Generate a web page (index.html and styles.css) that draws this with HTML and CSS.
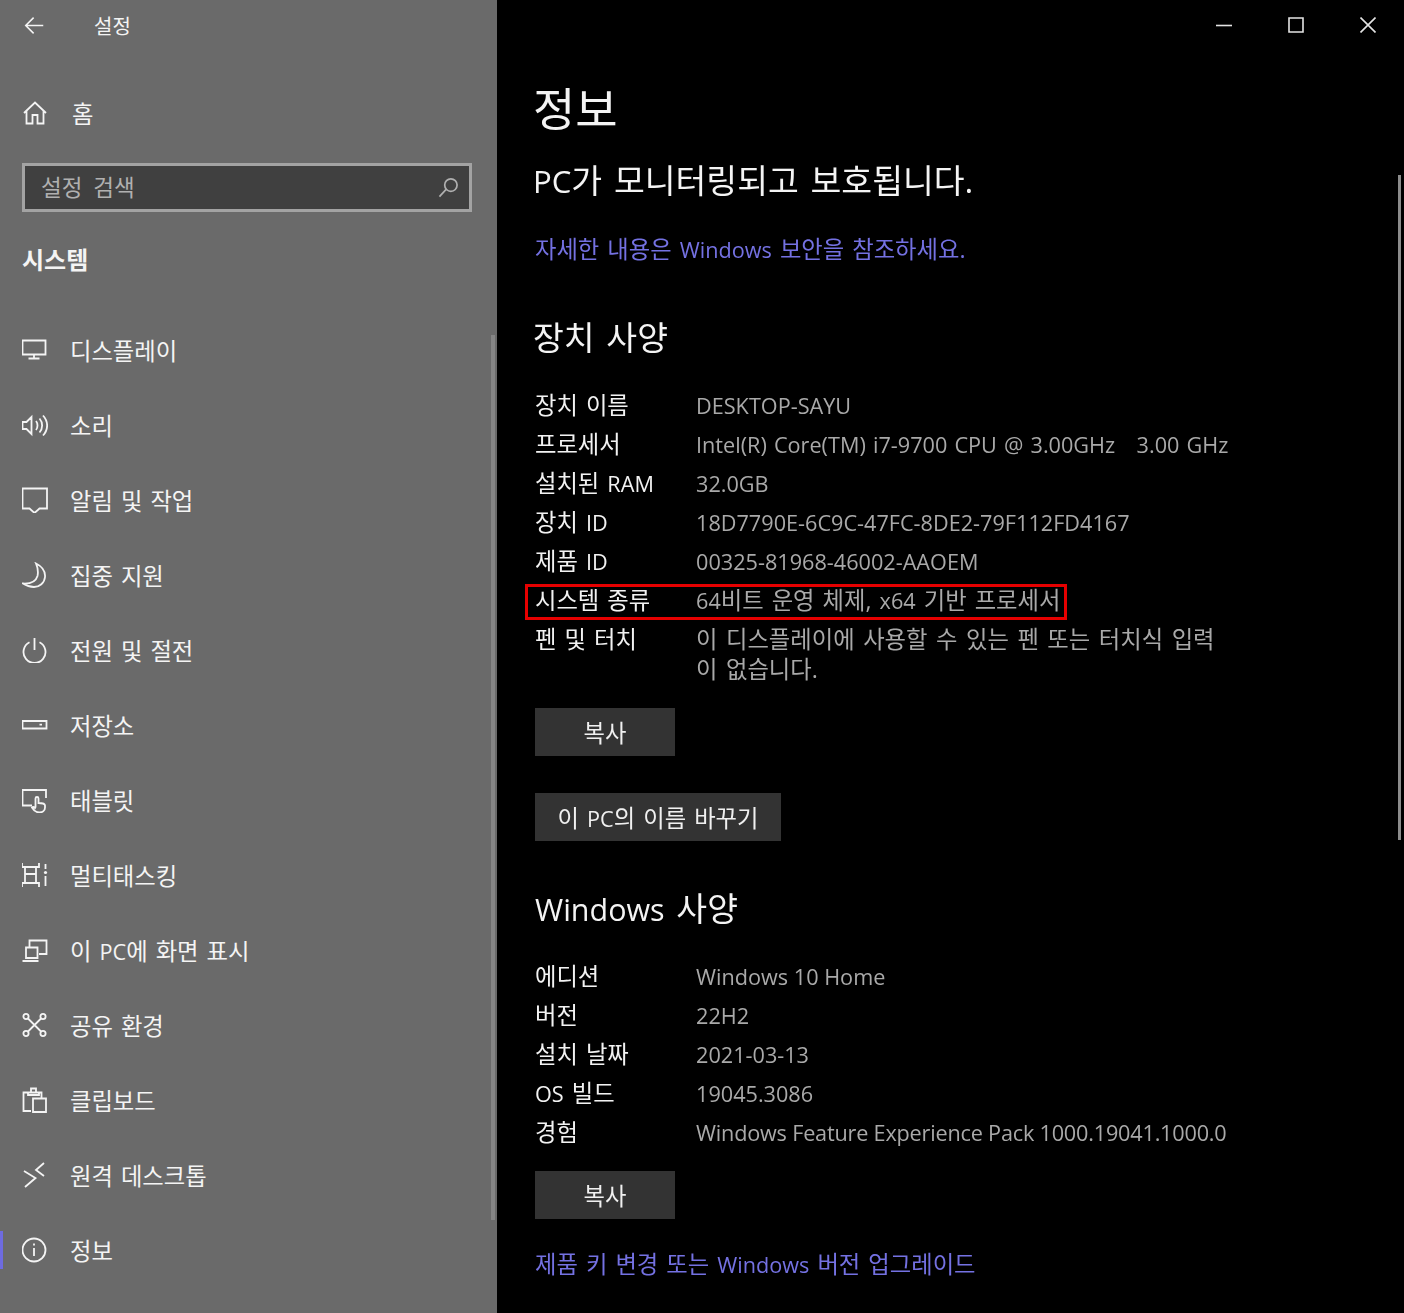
FILE: index.html
```html
<!DOCTYPE html>
<html lang="ko">
<head>
<meta charset="utf-8">
<title>설정</title>
<link rel="stylesheet" href="styles.css">
</head>
<body>
<div class="app">
  <aside class="sidebar">
    <div class="side-head">
      <svg class="back" viewBox="0 0 24 24"><path d="M11 3 2 12l9 9M3 12h19"/></svg>
      <span class="side-title">설정</span>
    </div>
    <div class="home">
      <svg class="icon" viewBox="0 0 26 26"><path d="M2 13 13 2.500 24 13M4.500 11v12.500h6V15h5v8.500h6V11"/></svg>
      <span>홈</span>
    </div>
    <div class="search">
      <span class="search-text">설정 검색</span>
      <svg class="search-icon" viewBox="0 0 22 22"><circle cx="13.500" cy="8.500" r="6.500"/><path d="M8.500 13 1.500 20.500"/></svg>
    </div>
    <div class="side-heading">시스템</div>
    <nav class="nav">
      <div class="nav-item"><svg class="icon" viewBox="0 0 26 26"><path d="M.500 3.500h23v14H.500zM12 17.500v4M6.500 21.500h11"/></svg><span>디스플레이</span></div>
      <div class="nav-item"><svg class="icon" viewBox="0 0 26 26"><path d="M.500 10v7h4l5 5V5l-5 5zM14 9c2 2.500 2 6.500 0 9M17.500 6.500c3.500 4 3.500 10 0 14M21 3.500c5.500 6 5.500 14 0 20"/></svg><span>소리</span></div>
      <div class="nav-item"><svg class="icon" viewBox="0 0 26 26"><path d="M.500 1.500h24.500v20h-7.500L12.500 26l-5-4.500h-7z"/></svg><span>알림 및 작업</span></div>
      <div class="nav-item"><svg class="icon" viewBox="0 0 26 26"><path d="M14 1.500c6 3 9.500 8 9 13.500-.5 6-5.500 10-11 10-4 0-8-1.500-11-3.500 8 .5 13-2.500 14.500-7.500 1-4.500 0-9-1.500-12.500z"/></svg><span>집중 지원</span></div>
      <div class="nav-item"><svg class="icon" viewBox="0 0 26 26"><path d="M7.500 5.200a11 11 0 1 0 10 0M12.500 1v12"/></svg><span>전원 및 절전</span></div>
      <div class="nav-item"><svg class="icon" viewBox="0 0 26 26"><path d="M.500 9h24v7.500H.500zM17.500 12.700H20"/></svg><span>저장소</span></div>
      <div class="nav-item"><svg class="icon" viewBox="0 0 26 26"><path d="M10 18.500H.500V3h23.500v8"/><path d="M13.500 20v-8.500c0-2 3-2 3 0V16c3.500 0 6.500.5 6.500 2.500v2c0 3-2.500 5-5.500 5-3 0-5.500-1.500-7.500-5 1-1 2-.5 3 .5z"/></svg><span>태블릿</span></div>
      <div class="nav-item"><svg class="icon" viewBox="0 0 26 26"><path d="M0 1v4h17V1M0 25v-4h17v4M3 5v16M14 5v16M3 12h11M23.500 2v5M23.500 14v10"/><circle class="dot" cx="23.500" cy="10.500" r="1.600"/></svg><span>멀티태스킹</span></div>
      <div class="nav-item"><svg class="icon" viewBox="0 0 26 26"><path d="M7.500 10V3.500h17v13.500H17"/><path d="M4 10.500h11.500V21H4zM.500 24h16"/></svg><span>이 <span class="la">PC</span>에 화면 표시</span></div>
      <div class="nav-item"><svg class="icon" viewBox="0 0 26 26"><circle cx="4" cy="4.500" r="2.600"/><circle cx="21" cy="4.500" r="2.600"/><circle cx="4" cy="21.500" r="2.600"/><circle cx="21" cy="21.500" r="2.600"/><path d="m6 6.500 13 13M19 6.500l-13 13"/></svg><span>공유 환경</span></div>
      <div class="nav-item"><svg class="icon" viewBox="0 0 26 26"><path d="M9 24H1.500V5.500h18v5M6 5.500V8h11V5.500h-3V1.500H9v4zM11 11.500h13V25H11z"/></svg><span>클립보드</span></div>
      <div class="nav-item"><svg class="icon" viewBox="0 0 26 26"><path d="m2 9 11.500 7L3 25M22 1l-8 7 8 6"/></svg><span>원격 데스크톱</span></div>
      <div class="nav-item active"><svg class="icon" viewBox="0 0 26 26"><circle cx="12" cy="13" r="11.500"/><path d="M12 11v8M12 6.500v2"/></svg><span>정보</span></div>
    </nav>
    <div class="side-scroll"></div>
  </aside>
  <main class="main">
    <div class="titlebar">
      <button class="win-btn"><svg viewBox="0 0 16 16"><path d="M0 8.500h16"/></svg></button>
      <button class="win-btn"><svg viewBox="0 0 16 16"><path d="M1 1h14v14H1z"/></svg></button>
      <button class="win-btn"><svg viewBox="0 0 16 16"><path d="m.5.500 15 15M15.500.500l-15 15"/></svg></button>
    </div>
    <h1 class="page-title">정보</h1>
    <p class="status"><span class="la">PC</span>가 모니터링되고 보호됩니다.</p>
    <a class="link security-link">자세한 내용은 <span class="la">Windows</span> 보안을 참조하세요.</a>
    <h2 class="section first-section">장치 사양</h2>
    <div class="specs">
      <div class="row"><span class="k">장치 이름</span><span class="v la">DESKTOP-SAYU</span></div>
      <div class="row"><span class="k">프로세서</span><span class="v la wide">Intel(R) Core(TM) i7-9700 CPU @ 3.00GHz &nbsp; 3.00 GHz</span></div>
      <div class="row"><span class="k">설치된 <span class="la">RAM</span></span><span class="v la">32.0GB</span></div>
      <div class="row"><span class="k">장치 <span class="la">ID</span></span><span class="v la">18D7790E-6C9C-47FC-8DE2-79F112FD4167</span></div>
      <div class="row"><span class="k">제품 <span class="la">ID</span></span><span class="v la">00325-81968-46002-AAOEM</span></div>
      <div class="row marked"><span class="k">시스템 종류</span><span class="v"><span class="la">64</span>비트 운영 체제, <span class="la">x64</span> 기반 프로세서</span></div>
      <div class="row"><span class="k">펜 및 터치</span><span class="v wrap">이 디스플레이에 사용할 수 있는 펜 또는 터치식 입력이 없습니다.</span></div>
    </div>
    <button class="btn copy">복사</button>
    <button class="btn rename">이 <span class="la">PC</span>의 이름 바꾸기</button>
    <h2 class="section win-section"><span class="la">Windows</span> 사양</h2>
    <div class="specs win-specs">
      <div class="row"><span class="k">에디션</span><span class="v la">Windows 10 Home</span></div>
      <div class="row"><span class="k">버전</span><span class="v la">22H2</span></div>
      <div class="row"><span class="k">설치 날짜</span><span class="v la">2021-03-13</span></div>
      <div class="row"><span class="k"><span class="la">OS</span> 빌드</span><span class="v la">19045.3086</span></div>
      <div class="row"><span class="k">경험</span><span class="v la tight">Windows Feature Experience Pack 1000.19041.1000.0</span></div>
    </div>
    <button class="btn copy copy-two">복사</button>
    <a class="link upgrade-link">제품 키 변경 또는 <span class="la">Windows</span> 버전 업그레이드</a>
    <div class="main-scroll"></div>
  </main>
</div>
</body>
</html>
```

FILE: styles.css
```css
* { box-sizing: border-box; }
html, body { margin: 0; height: 100%; }
body {
  background: #000;
  font-family: "Open Sans", "Noto Sans CJK KR", sans-serif;
  font-size: 23.3px;
  word-spacing: 2px;
  overflow: hidden;
}
.app { display: flex; width: 1404px; height: 1313px; filter: blur(0.4px); }
.la { font-size: 0.93em; word-spacing: 0; }
.tight { letter-spacing: -0.2px; }
.wide { word-spacing: 1.500px; }

svg { fill: none; stroke: currentColor; stroke-width: 1.8; }

/* sidebar */
.sidebar {
  position: relative;
  width: 497px;
  flex: none;
  background: #6a6a6a;
  color: #f4f4f4;
  display: flex;
  flex-direction: column;
}
.side-head { height: 50px; display: flex; align-items: center; padding-left: 24px; }
.back { width: 21px; height: 21px; flex: none; }
.side-title { margin-left: 49px; font-size: 20px; }
.home { height: 75px; margin-top: 25px; display: flex; align-items: center; padding-left: 22px; }
.icon { width: 26px; height: 26px; flex: none; margin-right: 22px; }
.home span { margin-left: 2px; }
.search {
  margin: 13px 0 0 22px;
  width: 450px;
  height: 49px;
  border: 3px solid #a3a3a3;
  background: #404040;
  color: #b0b0b0;
  display: flex;
  align-items: center;
  justify-content: space-between;
  padding: 0 10px 0 16px;
  font-size: 22.5px;
  word-spacing: 5px;
}
.search-text { margin-bottom: 3px; }
.search-icon { width: 21px; height: 21px; }
.side-heading { margin: 24px 0 0 22px; height: 48px; line-height: 48px; font-weight: 700; font-size: 24px; }
.nav { margin-top: 28px; display: flex; flex-direction: column; }
.nav-item { height: 75px; display: flex; align-items: center; padding-left: 22px; position: relative; }
.nav-item .dot { fill: currentColor; stroke: none; }
.active::before {
  content: "";
  position: absolute;
  left: 0;
  top: 19px;
  width: 3px;
  height: 38px;
  background: #6e6be0;
}
.side-scroll {
  position: absolute;
  left: 491px;
  top: 335px;
  width: 4px;
  height: 885px;
  background: #858585;
}

/* main */
.main { position: relative; flex: 1; padding-left: 38px; color: #f4f4f4; min-width: 0; }
.titlebar { height: 50px; display: flex; justify-content: flex-end; }
.win-btn {
  width: 72px;
  height: 50px;
  padding: 0;
  border: 0;
  background: none;
  color: #e4e4e4;
  display: flex;
  align-items: center;
  justify-content: center;
}
.win-btn svg { width: 16px; height: 16px; stroke-width: 1.6; }
.page-title { margin: 28px 0 0 -2px; font-size: 46px; line-height: 60px; font-weight: 400; }
.status { margin: 20px 0 0 -2px; font-size: 33.500px; line-height: 44px; font-weight: 400; word-spacing: 3px; }
.link { display: block; color: #7471e2; line-height: 32px; }
.security-link { margin-top: 30px; }
.section { margin: 0; font-size: 33.500px; line-height: 44px; font-weight: 400; word-spacing: 3px; }
.section .la { font-size: 0.91em; }
.first-section { margin-top: 49px; margin-left: -2px; }
.specs { margin-top: 32px; }
.win-specs { margin-top: 31px; }
.row { display: flex; padding-bottom: 9.500px; line-height: 29.500px; width: fit-content; position: relative; }
.k { width: 161px; flex: none; color: #f2f2f2; }
.v { color: #a9a9a9; white-space: nowrap; }
.v.wrap { white-space: normal; width: 530px; word-spacing: 2.500px; }
.marked::after {
  content: "";
  position: absolute;
  left: -10px;
  right: -7px;
  top: -2px;
  bottom: 5px;
  border: 3px solid #e60000;
}
.btn {
  display: block;
  height: 48px;
  padding: 0;
  border: 0;
  background: #333;
  color: #f0f0f0;
  font: inherit;
  word-spacing: inherit;
}
.copy { width: 140px; margin-top: 14px; }
.rename { width: 246px; margin-top: 37px; }
.win-section { margin-top: 45px; }
.copy-two { margin-top: 14px; }
.upgrade-link { margin-top: 29px; }
.main-scroll {
  position: absolute;
  left: 901px;
  top: 175px;
  width: 3px;
  height: 665px;
  background: #8c8c8c;
}
```
